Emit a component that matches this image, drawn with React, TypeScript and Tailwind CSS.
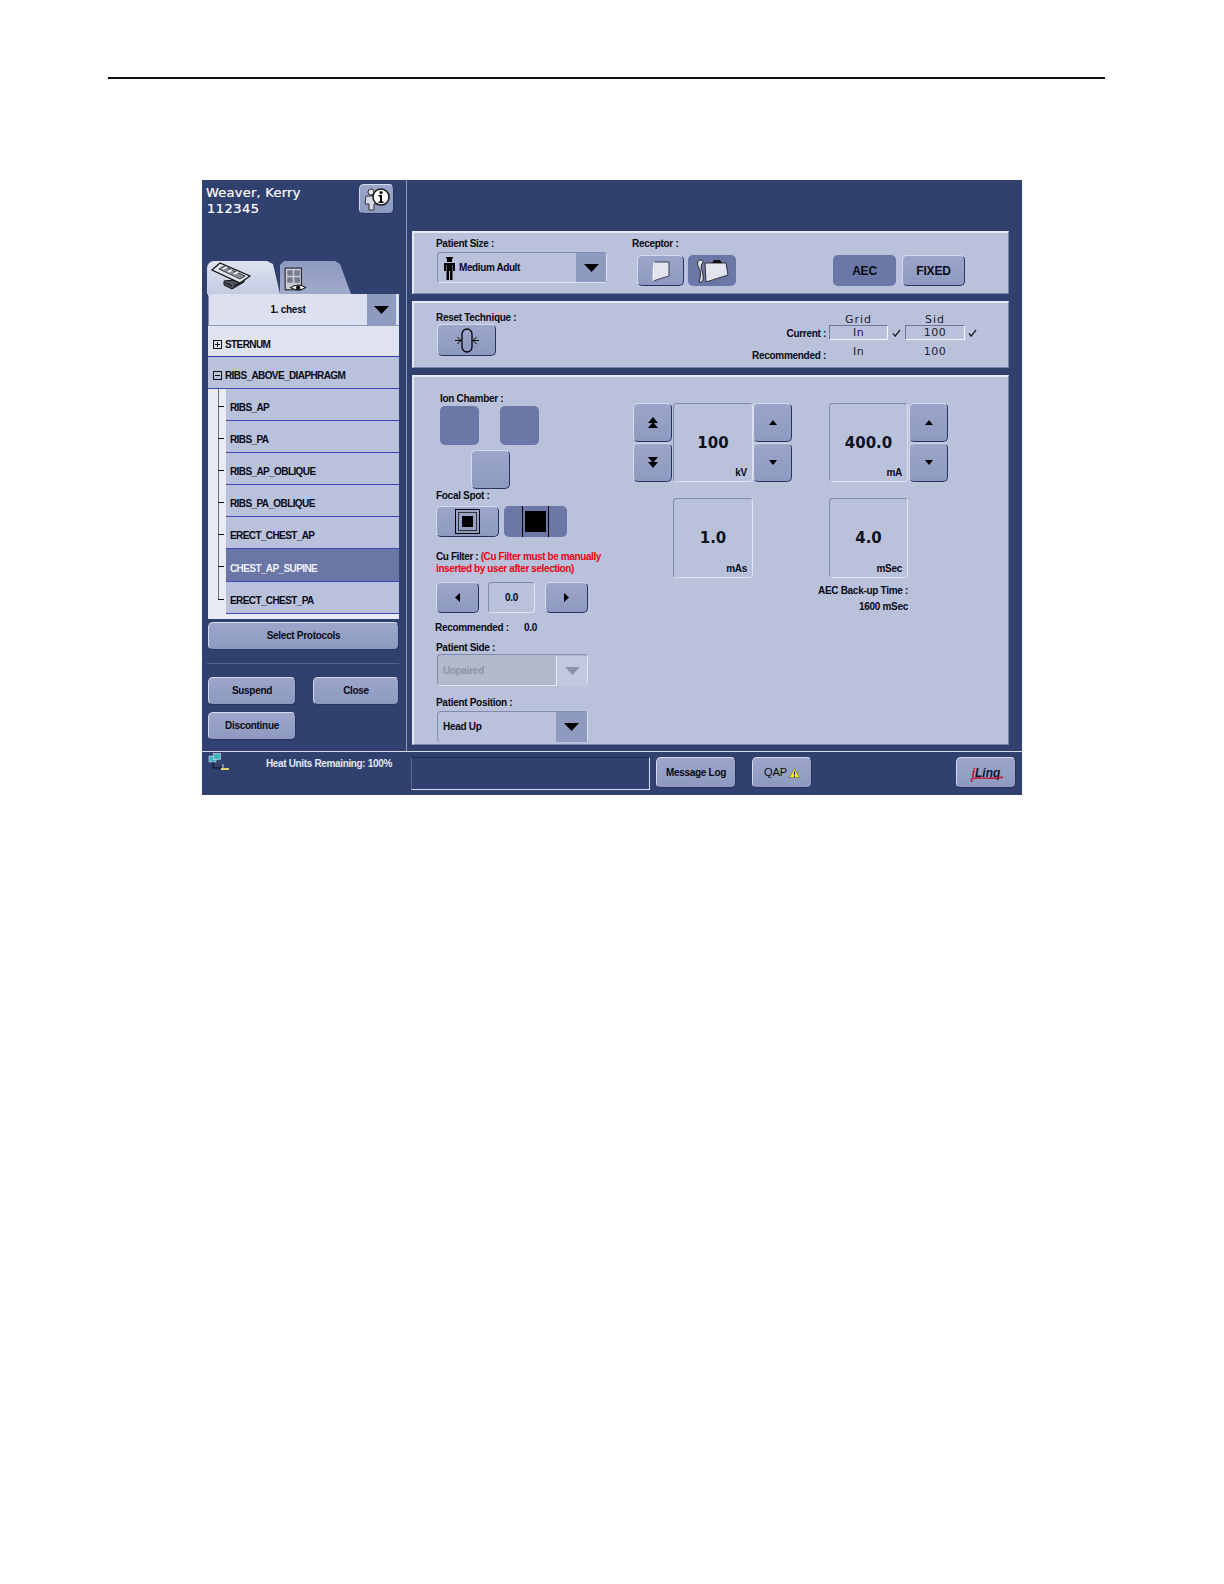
import React from "react";

const bevel = "border border-t-[#d4daeb] border-l-[#d4daeb] border-r-[#27345f] border-b-[#27345f] rounded-[5px]";
const btn = `${bevel} bg-gradient-to-b from-[#9ca6ca] to-[#8d99bf] flex items-center justify-center`;
const onBtn = "rounded-[5px] bg-[#6b77a6] flex items-center justify-center";
const field = "border border-t-[#808aac] border-l-[#808aac] border-r-[#dfe3f0] border-b-[#dfe3f0] rounded-[4px]";
const sharp = "border border-t-[#6f7799] border-l-[#6f7799] border-r-[#f4f6fb] border-b-[#f4f6fb]";
const bold = "text-[10px] font-bold leading-[12px] tracking-[-0.3px] text-[#0a0a14] whitespace-nowrap";
const label = `${bold} h-[12px] leading-[14px]`;
const dv = "font-['DejaVu_Sans',sans-serif]";
const treeText = "text-[10px] font-bold tracking-[-0.6px] whitespace-nowrap";
const panel = "w-[597px] bg-[#b9c1db] border-t-2 border-l-2 border-t-[#e6eaf5] border-l-[#e6eaf5] border-r border-b border-r-[#7883ab] border-b-[#7883ab] flex pl-[22px]";

const Tri = ({ up = false, w = 8, h = 5, c = "#000" }: { up?: boolean; w?: number; h?: number; c?: string }) => (
  <svg width={w} height={h} viewBox="0 0 10 5" preserveAspectRatio="none">
    <polygon points={up ? "0,5 10,5 5,0" : "0,0 10,0 5,5"} fill={c} />
  </svg>
);

const DoubleTri = ({ up = false }: { up?: boolean }) => (
  <svg width="10" height="11" viewBox="0 0 10 11">
    <g fill="#000">
      {up ? (
        <>
          <polygon points="0,6 10,6 5,0" />
          <polygon points="0,11 10,11 5,5" />
        </>
      ) : (
        <>
          <polygon points="0,0 10,0 5,6" />
          <polygon points="0,5 10,5 5,11" />
        </>
      )}
    </g>
  </svg>
);

const Row = ({ name, sel = false, last = false }: { name: string; sel?: boolean; last?: boolean }) => (
  <div className="flex h-[32.1px]">
    <div className="w-[18px] relative shrink-0">
      <div className={`ml-[10px] w-px bg-[#6a6f80] ${last ? "h-[17px]" : "h-full"}`} />
      <div className="absolute left-[10px] top-[17px] w-[6px] h-px bg-[#111]" />
    </div>
    <div
      className={`flex-1 flex items-center pl-[4px] pt-[6px] border-b border-[#3c47b8] ${treeText} ${
        sel ? "bg-[#6a76a6] text-[#eef0f8]" : "bg-[#b9c1db] text-[#0a0a14]"
      }`}
    >
      {name}
    </div>
  </div>
);

const PlusBox = ({ minus = false }: { minus?: boolean }) => (
  <svg width="9" height="9" viewBox="0 0 9 9" className="shrink-0">
    <rect x=".5" y=".5" width="8" height="8" fill="none" stroke="#111" />
    <path d={minus ? "M2 4.500H7" : "M2 4.500H7M4.500 2V7"} stroke="#111" />
  </svg>
);

const ChamberOn = () => <div className={`${onBtn} w-[39px] h-[39px]`} />;

const Readout = ({ value, unit, w, h }: { value: string; unit: string; w: string; h: string }) => (
  <div className={`${field} ${w} ${h} flex flex-col`}>
    <div className={`${dv} text-[15px] font-bold text-[#10131f] text-center mt-[27px] leading-[24px]`}>{value}</div>
    <div className={`mt-auto mb-[2px] mr-[5px] text-right ${bold}`}>{unit}</div>
  </div>
);

const Step = ({ children }: { children: React.ReactNode }) => <div className={`${btn} w-[39px] h-[39px]`}>{children}</div>;

const Check = () => (
  <svg width="9" height="8" viewBox="0 0 10 9">
    <path d="M1 5L3.500 8L9 1" fill="none" stroke="#111" strokeWidth="1.400" />
  </svg>
);

export default function App() {
  return (
    <div className="w-[1224px] h-[1584px] bg-white overflow-hidden font-['Liberation_Sans',Arial,sans-serif]">
      <div className="h-[77px]" />
      <div className="ml-[108px] w-[997px] h-[2px] bg-[#111]" />
      <div className="ml-[202px] mt-[101px] w-[820px] h-[615px] bg-[#30406f] flex flex-col">
        <div className="h-[571px] flex">
          {/* Sidebar */}
          <div className="w-[205px] shrink-0 border-r border-[#8e9ac0] flex flex-col">
            <div className="h-[81px] flex">
              <div className={`${dv} pl-[4px] pt-[5px] text-[13px] leading-[16px] text-white tracking-[0.25px] [-webkit-text-stroke:0.2px_white] w-[157px]`}>
                Weaver, Kerry
                <br />
                <span className="ml-[1px] tracking-[0.5px]">112345</span>
              </div>
              <div className={`${btn} mt-[4px] w-[35px] h-[30px]`}>
                <svg width="28" height="24" viewBox="0 0 28 24">
                  <circle cx="8" cy="5" r="3" fill="#e4e6ee" stroke="#333" />
                  <path d="M3 9h10l1 8h-3v6H6v-6H2z" fill="#d4d8e4" stroke="#333" />
                  <circle cx="18" cy="10" r="8" fill="#fff" stroke="#111" strokeWidth="1.500" />
                  <circle cx="18" cy="5.500" r="1.600" fill="#000" />
                  <path d="M15.500 8h3.500v6.500h1.500V16h-5v-1.500H17V9.500h-1.500z" fill="#000" />
                </svg>
              </div>
            </div>
            {/* tabs */}
            <div className="h-[33px] flex pl-[5px]">
              <div className="w-[73px] h-[33px] bg-gradient-to-b from-[#dfe3f0] to-[#c3cbe2] rounded-t-[7px] [clip-path:polygon(0_3px,3px_0,60px_0,66px_3px,73px_33px,0_33px)] flex items-start pl-[4px] pt-[1px]">
                <svg width="40" height="28" viewBox="0 0 40 28">
                  <path d="M13 19v4l8 4l12-7v-3z" fill="#4b4f5c" stroke="#111" />
                  <path d="M1 8L9 1L39 14L29 21Z" fill="#dfe2ea" stroke="#111" strokeWidth="1.200" />
                  <path d="M8 7l5-3l21 10l-5 3z" fill="#8b8f9c" stroke="#222" strokeWidth=".8" />
                  <path d="M12 7l4-2M17 10l4-2M23 12l4-2" stroke="#f4f5f8" strokeWidth="1.800" />
                  <path d="M15 21l6 3M23 24l6-3" stroke="#111" strokeWidth="1" />
                </svg>
              </div>
              <div className="w-[71px] h-[33px] bg-gradient-to-b from-[#8e9ac0] to-[#a0aacb] [clip-path:polygon(0_4px,4px_0,55px_0,60px_3px,71px_33px,0_33px)] flex items-start pl-[4px] pt-[6px]">
                <svg width="24" height="25" viewBox="0 0 22 23">
                  <rect x="1" y="1" width="15" height="20" fill="#c8ccd8" stroke="#222" />
                  <path d="M3 3h5v5H3zM9.500 3h5v5h-5zM3 9.500h5v5H3zM9.500 9.500h5v5h-5z" fill="#777c8a" />
                  <path d="M6 19Q13 14 20 19Q13 23 6 19z" fill="#fff" stroke="#111" />
                  <circle cx="13" cy="19" r="2" fill="#111" />
                </svg>
              </div>
            </div>
            {/* combo + tree */}
            <div className="ml-[6px] w-[191px] h-[325px] bg-[#e8ebf4] flex flex-col overflow-hidden">
              <div className="h-[31px] bg-[#dde1ef] rounded-t-[4px] border-l border-[#808aac] flex shrink-0">
                <div className="flex-1 text-center text-[10px] font-bold tracking-[-0.3px] leading-[31px] text-[#0a0a14]">1. chest</div>
                <div className="w-[29px] mr-[3px] h-[31px] bg-[#8e9ac0] flex items-center justify-center">
                  <Tri w={15} h={8} />
                </div>
              </div>
              <div className={`h-[32px] shrink-0 bg-[#dfe3f0] border-b border-[#2a35a8] border-t border-t-[#8e9ac0] flex items-center gap-[3px] pl-[5px] pt-[6px] text-[#0a0a14] ${treeText}`}>
                <PlusBox />
                STERNUM
              </div>
              <div className={`h-[32px] shrink-0 bg-[#b9c1db] border-b border-[#3c47b8] flex items-center gap-[3px] pl-[5px] pt-[6px] text-[#0a0a14] ${treeText}`}>
                <PlusBox minus />
                RIBS_ABOVE_DIAPHRAGM
              </div>
              <Row name="RIBS_AP" />
              <Row name="RIBS_PA" />
              <Row name="RIBS_AP_OBLIQUE" />
              <Row name="RIBS_PA_OBLIQUE" />
              <Row name="ERECT_CHEST_AP" />
              <Row name="CHEST_AP_SUPINE" sel />
              <Row name="ERECT_CHEST_PA" last />
            </div>
            <div className={`${btn} ${bold} ml-[6px] mt-[3px] w-[191px] h-[28px]`}>Select Protocols</div>
            <div className="ml-[5px] mt-[13px] w-[192px] h-px bg-[#56648f]" />
            <div className="flex ml-[6px] mt-[13px]">
              <div className={`${btn} ${bold} w-[88px] h-[28px]`}>Suspend</div>
              <div className={`${btn} ${bold} ml-[17px] w-[86px] h-[28px]`}>Close</div>
            </div>
            <div className={`${btn} ${bold} ml-[6px] mt-[7px] w-[88px] h-[28px]`}>Discontinue</div>
          </div>

          {/* Main */}
          <div className="flex-1 pl-[5px] pt-[51px] flex flex-col gap-[7px]">
            {/* Panel 1 */}
            <div className={`${panel} h-[63px] pt-[4px]`}>
              <div className="w-[196px]">
                <div className={label}>Patient Size :</div>
                <div className={`${field} ml-[1px] mt-[3px] w-[170px] h-[31px] flex items-center pl-[5px]`}>
                  <svg width="13" height="24" viewBox="0 0 13 24">
                    <path d="M3 1h7v1.500H3zM4 2.500h5V6H4z" fill="#000" />
                    <path d="M1 7h11v8h-2v-6h-.500v15H7V15H6v9H3.500V9H3v6H1z" fill="#000" />
                  </svg>
                  <span className={`ml-[3px] ${bold} tracking-[-0.4px]`}>Medium Adult</span>
                  <div className="ml-auto w-[30px] h-[29px] bg-[#8e9ac0] flex items-center justify-center">
                    <Tri w={15} h={8} />
                  </div>
                </div>
              </div>
              <div className="w-[201px]">
                <div className={label}>Receptor :</div>
                <div className="flex gap-[4px] ml-[5px] mt-[6px]">
                  <div className={`${btn} w-[47px] h-[31px]`}>
                    <svg width="18" height="22" viewBox="0 0 18 22">
                      <path d="M2 2h15v14L1 21z" fill="#e2e5ef" stroke="#3a3f55" />
                      <path d="M2 2L1 21" stroke="#f6f7fa" strokeWidth="1.500" />
                    </svg>
                  </div>
                  <div className={`${onBtn} w-[48px] h-[31px]`}>
                    <svg width="36" height="26" viewBox="0 0 36 26">
                      <path d="M6 2c-3 0-3 5-1 8s2 8 0 14c3 1 5-1 4-7S6 9 8 6s1-4-2-4z" fill="#dfe2ec" stroke="#222" />
                      <path d="M11 5h21l2 12l-22 7z" fill="#e2e5ef" stroke="#333" />
                      <path d="M18 5l2-3h6l2 3z" fill="#111" />
                    </svg>
                  </div>
                </div>
              </div>
              <div className="flex gap-[6px] mt-[18px]">
                <div className={`${onBtn} w-[63px] h-[31px] text-[12px] font-bold tracking-[-0.2px] text-[#0a0a14]`}>AEC</div>
                <div className={`${btn} w-[63px] h-[31px] text-[12px] font-bold tracking-[-0.2px] text-[#0a0a14]`}>FIXED</div>
              </div>
            </div>
            {/* Panel 2 */}
            <div className={`${panel} h-[67px] pt-[8px]`}>
              <div className="w-[316px]">
                <div className={label}>Reset Technique :</div>
                <div className={`${btn} ml-[1px] mt-[1px] w-[59px] h-[32px]`}>
                  <svg width="28" height="25" viewBox="0 0 28 25">
                    <rect x="9" y="1" width="10" height="23" rx="5" fill="none" stroke="#000" strokeWidth="1.300" />
                    <path d="M2 12.500H8M4.500 9L8 12.500L4.500 16M26 12.500H20M23.500 9L20 12.500L23.500 16" fill="none" stroke="#000" />
                  </svg>
                </div>
              </div>
              <div className={`${dv} text-[11px] text-[#1f2233] mt-[2px]`}>
                <div className="flex h-[12px] leading-[13px] tracking-[1px]">
                  <div className="w-[77px]" />
                  <div className="w-[59px] text-center">Grid</div>
                  <div className="w-[17px]" />
                  <div className="w-[60px] text-center">Sid</div>
                </div>
                <div className="flex h-[15px]">
                  <div className={`w-[74px] text-right ${bold} leading-[17px] font-['Liberation_Sans',sans-serif]`}>Current :</div>
                  <div className={`ml-[3px] ${sharp} w-[59px] h-[15px] text-center leading-[14px] tracking-[0.5px]`}>In</div>
                  <div className="w-[17px] flex justify-center items-center"><Check /></div>
                  <div className={`${sharp} w-[60px] h-[15px] text-center leading-[14px] tracking-[0.5px]`}>100</div>
                  <div className="ml-[3px] flex items-center"><Check /></div>
                </div>
                <div className="flex h-[14px] mt-[5px] leading-[14px] tracking-[0.5px]">
                  <div className={`w-[74px] text-right ${bold} font-['Liberation_Sans',sans-serif] pt-[5px]`}>Recommended :</div>
                  <div className="ml-[3px] w-[59px] text-center">In</div>
                  <div className="w-[17px]" />
                  <div className="w-[60px] text-center">100</div>
                </div>
              </div>
            </div>
            {/* Panel 3 */}
            <div className={`${panel} h-[370px] overflow-hidden`}>
              <div className="w-[197px] shrink-0">
                <div className={`${label} mt-[15px] ml-[4px]`}>Ion Chamber :</div>
                <div className="flex gap-[21px] ml-[4px] mt-[2px]">
                  <ChamberOn />
                  <ChamberOn />
                </div>
                <div className={`${btn} ml-[35px] mt-[5px] w-[39px] h-[39px]`} />
                <div className={label}>Focal Spot :</div>
                <div className="flex gap-[5px] mt-[5px]">
                  <div className={`${btn} w-[63px] h-[31px]`}>
                    <div className="w-[25px] h-[25px] border border-black flex items-center justify-center">
                      <div className="w-[19px] h-[19px] border border-[#333] flex items-center justify-center">
                        <div className="w-[11px] h-[11px] bg-black" />
                      </div>
                    </div>
                  </div>
                  <div className={`${onBtn} w-[63px] h-[31px]`}>
                    <div className="w-[27px] h-[31px] border-x border-black flex items-center justify-center">
                      <div className="w-[21px] h-[21px] bg-black" />
                    </div>
                  </div>
                </div>
                <div className="mt-[14px] h-[23px] text-[10px] font-bold leading-[12px] tracking-[-0.4px] whitespace-nowrap text-[#0a0a14]">
                  Cu Filter : <span className="text-[#f00010]">(Cu Filter must be manually</span>
                  <br />
                  <span className="text-[#f00010]">inserted by user after selection)</span>
                </div>
                <div className="flex mt-[8px]">
                  <div className={`${btn} w-[43px] h-[31px]`}><svg width="5" height="9" viewBox="0 0 5 9"><polygon points="5,0 5,9 0,4.500" fill="#000" /></svg></div>
                  <div className={`${field} ${bold} ml-[9px] w-[47px] h-[31px] flex items-center justify-center`}>0.0</div>
                  <div className={`${btn} ml-[10px] w-[43px] h-[31px]`}><svg width="5" height="9" viewBox="0 0 5 9"><polygon points="0,0 0,9 5,4.500" fill="#000" /></svg></div>
                </div>
                <div className={`flex mt-[9px] ml-[-1px] ${bold}`}>
                  <span className="w-[89px]">Recommended :</span>
                  <span>0.0</span>
                </div>
                <div className={`${label} mt-[7px]`}>Patient Side :</div>
                <div className={`${field} mt-[1px] ml-[1px] w-[151px] h-[32px] flex items-center bg-[#b4b9cb] pl-[5px] pt-px`}>
                  <span className="text-[10px] font-bold tracking-[-0.3px] text-[#8d93aa]">Unpaired</span>
                  <div className="ml-auto w-[31px] h-[30px] bg-[#c2c9df] border-l border-[#e6eaf5] flex items-center justify-center">
                    <Tri w={15} h={8} c="#8a92aa" />
                  </div>
                </div>
                <div className={`${label} mt-[10px]`}>Patient Position :</div>
                <div className={`${field} mt-[3px] ml-[1px] w-[151px] h-[31px] flex items-center pl-[5px] border-b-0`}>
                  <span className={bold}>Head Up</span>
                  <div className="ml-auto w-[31px] h-[30px] bg-[#8e9ac0] flex items-center justify-center">
                    <Tri w={15} h={8} />
                  </div>
                </div>
              </div>
              {/* Readouts */}
              <div className="pt-[26px]">
                <div className="flex">
                  <div className="flex flex-col gap-px">
                    <Step><DoubleTri up /></Step>
                    <Step><DoubleTri /></Step>
                  </div>
                  <div className="ml-px"><Readout value="100" unit="kV" w="w-[80px]" h="h-[79px]" /></div>
                  <div className="flex flex-col gap-px">
                    <Step><Tri up /></Step>
                    <Step><Tri /></Step>
                  </div>
                  <div className="ml-[37px]"><Readout value="400.0" unit="mA" w="w-[79px]" h="h-[79px]" /></div>
                  <div className="ml-px flex flex-col gap-px">
                    <Step><Tri up /></Step>
                    <Step><Tri /></Step>
                  </div>
                </div>
                <div className="flex mt-[16px] ml-[40px]">
                  <Readout value="1.0" unit="mAs" w="w-[80px]" h="h-[80px]" />
                  <div className="ml-[76px]">
                    <Readout value="4.0" unit="mSec" w="w-[79px]" h="h-[80px]" />
                  </div>
                </div>
                <div className={`w-[275px] mt-[5px] text-right ${bold} leading-[16px]`}>
                  AEC Back-up Time :
                  <br />
                  1600 mSec
                </div>
              </div>
            </div>
          </div>
        </div>
        {/* Status bar */}
        <div className="h-[44px] border-t border-[#d6dbea] flex">
          <div className="w-[209px] shrink-0 flex pl-[6px] pt-[1px]">
            <svg width="22" height="19" viewBox="0 0 22 19" className="shrink-0">
              <rect x="1" y="3" width="7" height="6" fill="#38b3c8" stroke="#ddd" strokeWidth=".6" />
              <rect x="5.500" y="0.500" width="7" height="6" fill="#3bb8c0" stroke="#ddd" strokeWidth=".6" />
              <path d="M5 9v6h9" fill="none" stroke="#111" />
              <path d="M15 11v4" stroke="#ccc" />
              <rect x="13" y="15" width="8" height="2" fill="#d8d860" />
            </svg>
            <div className={`ml-[36px] mt-[5px] ${bold} tracking-[-0.35px] text-[#e3e6f1]`}>Heat Units Remaining: 100%</div>
          </div>
          <div className="flex pt-[5px]">
            <div className="w-[239px] h-[33px] border border-t-[#1e2a50] border-l-[#5c6890] border-r-[#d6dbea] border-b-[#d6dbea]" />
            <div className={`${btn} ${bold} ml-[6px] w-[80px] h-[31px]`}>Message Log</div>
            <div className={`${btn} ml-[16px] w-[60px] h-[31px] gap-[2px] text-[11px] text-[#0a0a14]`}>
              QAP
              <svg width="11" height="10" viewBox="0 0 11 10">
                <polygon points="5.500,0.500 10.500,9.500 0.500,9.500" fill="#f2f000" stroke="#666" strokeWidth=".6" />
                <path d="M5.500 3.500V6.800M5.500 7.500V9" stroke="#111" />
              </svg>
            </div>
            <div className={`${btn} ml-[144px] w-[60px] h-[31px] relative`}>
              <span className="font-bold italic text-[12px] text-[#14162e]"><span className="text-[#c8102e]">i</span>Linq</span>
              <svg className="absolute left-[13px] top-[13px]" width="34" height="12" viewBox="0 0 34 12">
                <path d="M2 11C0 7 3 7 9 7C18 7 26 8 33 6" fill="none" stroke="#c8102e" strokeWidth="1.400" />
              </svg>
            </div>
          </div>
        </div>
      </div>
    </div>
  );
}
